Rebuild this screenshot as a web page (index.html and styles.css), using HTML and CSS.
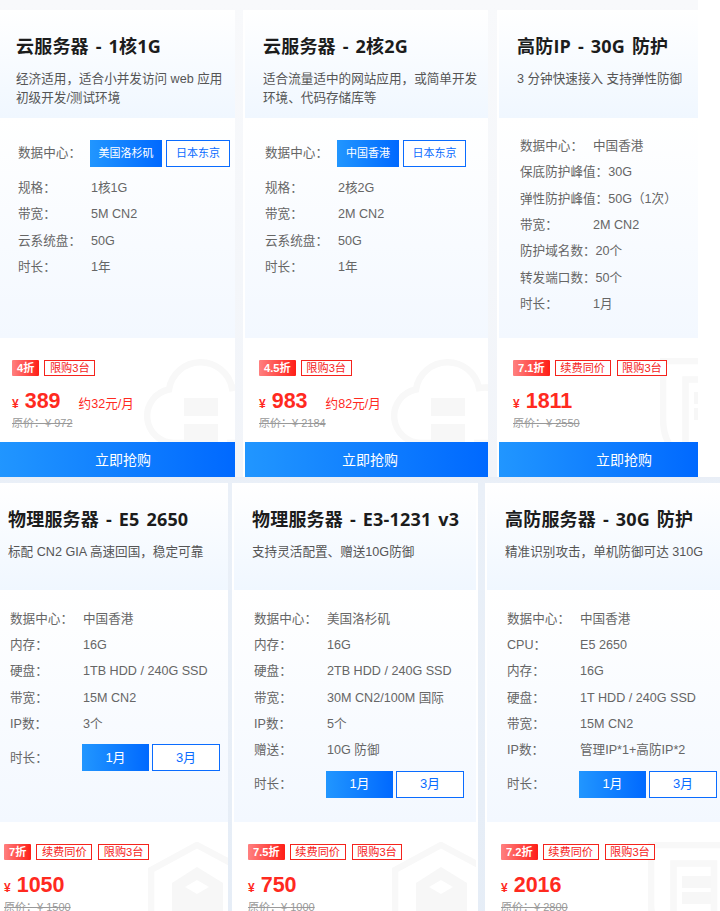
FILE: index.html
```html
<!DOCTYPE html>
<html lang="zh-CN">
<head>
<meta charset="utf-8">
<title>服务器套餐</title>
<link rel="stylesheet" href="styles.css">
</head>
<body>
<main class="page">
  <section class="row row-top">
    <article class="card w-a">
      <header class="head"><h2>云服务器 - 1核1G</h2><p>经济适用，适合小并发访问 web 应用<br>初级开发/测试环境</p></header>
      <div class="spec spec-select">
        <div class="line select"><span class="k">数据中心：</span><span class="opt on w72">美国洛杉矶</span><span class="opt w64">日本东京</span></div>
        <div class="line"><span class="k">规格：</span><span>1核1G</span></div>
        <div class="line"><span class="k">带宽：</span><span>5M CN2</span></div>
        <div class="line"><span class="k">云系统盘：</span><span>50G</span></div>
        <div class="line"><span class="k">时长：</span><span>1年</span></div>
      </div>
      <div class="foot">
        <svg class="mark" width="110" height="90" viewBox="0 0 110 90"><path class="ms" d="M44 85H31A27 27 0 0 1 26 31.5A32 32 0 0 1 89 30A27 27 0 0 1 100 85H84"/><path class="mf" d="M41 40h34v18H41zM41 66h34v18H41z"/></svg>
        <div class="tags"><span class="off">4折</span><span class="tag">限购3台</span></div>
        <div class="price"><span class="yen">¥</span><b>389</b><span class="per">约32元/月</span></div>
        <div class="old">原价：¥ 972</div>
      </div>
      <a class="buy">立即抢购</a>
    </article>
    <article class="card w-b">
      <header class="head"><h2>云服务器 - 2核2G</h2><p>适合流量适中的网站应用，或简单开发<br>环境、代码存储库等</p></header>
      <div class="spec spec-select">
        <div class="line select"><span class="k">数据中心：</span><span class="opt on w62">中国香港</span><span class="opt w63">日本东京</span></div>
        <div class="line"><span class="k">规格：</span><span>2核2G</span></div>
        <div class="line"><span class="k">带宽：</span><span>2M CN2</span></div>
        <div class="line"><span class="k">云系统盘：</span><span>50G</span></div>
        <div class="line"><span class="k">时长：</span><span>1年</span></div>
      </div>
      <div class="foot">
        <svg class="mark" width="110" height="90" viewBox="0 0 110 90"><path class="ms" d="M44 85H31A27 27 0 0 1 26 31.5A32 32 0 0 1 89 30A27 27 0 0 1 100 85H84"/><path class="mf" d="M41 40h34v18H41zM41 66h34v18H41z"/></svg>
        <div class="tags"><span class="off">4.5折</span><span class="tag">限购3台</span></div>
        <div class="price"><span class="yen">¥</span><b>983</b><span class="per">约82元/月</span></div>
        <div class="old">原价：¥ 2184</div>
      </div>
      <a class="buy">立即抢购</a>
    </article>
    <article class="card w-c">
      <header class="head"><h2>高防IP - 30G 防护</h2><p>3 分钟快速接入 支持弹性防御</p></header>
      <div class="spec spec-plain">
        <div class="line"><span class="k">数据中心：</span><span>中国香港</span></div>
        <div class="line"><span class="k">保底防护峰值：</span><span>30G</span></div>
        <div class="line"><span class="k">弹性防护峰值：</span><span>50G（1次）</span></div>
        <div class="line"><span class="k">带宽：</span><span>2M CN2</span></div>
        <div class="line"><span class="k">防护域名数：</span><span>20个</span></div>
        <div class="line"><span class="k">转发端口数：</span><span>50个</span></div>
        <div class="line"><span class="k">时长：</span><span>1月</span></div>
      </div>
      <div class="foot">
        <svg class="mark mark-s" width="100" height="90" viewBox="0 0 100 90"><path class="ms" d="M3 3H98V60C98 85 85 100 60 100H35C15 100 3 85 3 60Z"/><path class="ms" d="M25.5 21.5H66V92H25.5Z"/><path class="mf" d="M34 34h29v12H34zM34 50h29v12H34z"/></svg>
        <div class="tags"><span class="off">7.1折</span><span class="tag">续费同价</span><span class="tag">限购3台</span></div>
        <div class="price"><span class="yen">¥</span><b>1811</b></div>
        <div class="old">原价：¥ 2550</div>
      </div>
      <a class="buy">立即抢购</a>
    </article>
  </section>
  <section class="row row-bottom">
    <article class="card w-d">
      <header class="head"><h2>物理服务器 - E5 2650</h2><p>标配 CN2 GIA 高速回国，稳定可靠</p></header>
      <div class="spec spec-term">
        <div class="line"><span class="k">数据中心：</span><span>中国香港</span></div>
        <div class="line"><span class="k">内存：</span><span>16G</span></div>
        <div class="line"><span class="k">硬盘：</span><span>1TB HDD / 240G SSD</span></div>
        <div class="line"><span class="k">带宽：</span><span>15M CN2</span></div>
        <div class="line"><span class="k">IP数：</span><span>3个</span></div>
        <div class="line select term"><span class="k">时长：</span><span class="opt on big">1月</span><span class="opt big">3月</span></div>
      </div>
      <div class="foot">
        <svg class="mark" width="100" height="90" viewBox="0 0 100 90"><path class="ms" d="M49 3L96 28V80L49 105L3 80V28Z"/><path class="mf" fill-rule="evenodd" d="M49 25L75 41V70L49 86L24 70V41ZM49 38L37 45L49 52L61 45Z"/></svg>
        <div class="tags"><span class="off">7折</span><span class="tag">续费同价</span><span class="tag">限购3台</span></div>
        <div class="price"><span class="yen">¥</span><b>1050</b></div>
        <div class="old">原价：¥ 1500</div>
      </div>
    </article>
    <article class="card w-e">
      <header class="head"><h2>物理服务器 - E3-1231 v3</h2><p>支持灵活配置、赠送10G防御</p></header>
      <div class="spec spec-term">
        <div class="line"><span class="k">数据中心：</span><span>美国洛杉矶</span></div>
        <div class="line"><span class="k">内存：</span><span>16G</span></div>
        <div class="line"><span class="k">硬盘：</span><span>2TB HDD / 240G SSD</span></div>
        <div class="line"><span class="k">带宽：</span><span>30M CN2/100M 国际</span></div>
        <div class="line"><span class="k">IP数：</span><span>5个</span></div>
        <div class="line"><span class="k">赠送：</span><span>10G 防御</span></div>
        <div class="line select term"><span class="k">时长：</span><span class="opt on big">1月</span><span class="opt big">3月</span></div>
      </div>
      <div class="foot">
        <svg class="mark" width="100" height="90" viewBox="0 0 100 90"><path class="ms" d="M49 3L96 28V80L49 105L3 80V28Z"/><path class="mf" fill-rule="evenodd" d="M49 25L75 41V70L49 86L24 70V41ZM49 38L37 45L49 52L61 45Z"/></svg>
        <div class="tags"><span class="off">7.5折</span><span class="tag">续费同价</span><span class="tag">限购3台</span></div>
        <div class="price"><span class="yen">¥</span><b>750</b></div>
        <div class="old">原价：¥ 1000</div>
      </div>
    </article>
    <article class="card w-f">
      <header class="head"><h2>高防服务器 - 30G 防护</h2><p>精准识别攻击，单机防御可达 310G</p></header>
      <div class="spec spec-term">
        <div class="line"><span class="k">数据中心：</span><span>中国香港</span></div>
        <div class="line"><span class="k">CPU：</span><span>E5 2650</span></div>
        <div class="line"><span class="k">内存：</span><span>16G</span></div>
        <div class="line"><span class="k">硬盘：</span><span>1T HDD / 240G SSD</span></div>
        <div class="line"><span class="k">带宽：</span><span>15M CN2</span></div>
        <div class="line"><span class="k">IP数：</span><span>管理IP*1+高防IP*2</span></div>
        <div class="line select term"><span class="k">时长：</span><span class="opt on big">1月</span><span class="opt big">3月</span></div>
      </div>
      <div class="foot">
        <svg class="mark mark-s" width="100" height="90" viewBox="0 0 100 90"><path class="ms" d="M3 3H98V60C98 85 85 100 60 100H35C15 100 3 85 3 60Z"/><path class="ms" d="M25.5 21.5H66V92H25.5Z"/><path class="mf" d="M34 34h29v12H34zM34 50h29v12H34z"/></svg>
        <div class="tags"><span class="off">7.2折</span><span class="tag">续费同价</span><span class="tag">限购3台</span></div>
        <div class="price"><span class="yen">¥</span><b>2016</b></div>
        <div class="old">原价：¥ 2800</div>
      </div>
    </article>
  </section>
</main>
</body>
</html>
```
FILE: styles.css
```css
* { box-sizing: border-box; }
html, body { margin: 0; height: 911px; overflow: hidden; background: #fff; }
body { font-family: "Liberation Sans", "Noto Sans CJK SC", sans-serif; font-size: 12.6px; color: #666; }
.page { width: 720px; height: 911px; overflow: hidden; }

.row { display: flex; align-items: flex-start; }
.row-top { width: 698px; height: 477px; padding-top: 10px; background: linear-gradient(#f8f9fb, #f1f4f9); }
.row-bottom { width: 720px; height: 620px; padding-top: 6px; background: linear-gradient(#e9eef6 0, #eaf0f8 6px, #e4ecf6 100%); overflow: hidden; }

.card { flex: none; overflow: hidden; background: #fff; }
.w-a { width: 237px; margin-right: 8px; }
.row-top .w-a { margin-left: -2px; }
.w-b { width: 245px; margin-right: 9px; padding-left: 2px; }
.w-c { width: 201px; padding-left: 2px; }
.w-d { width: 238px; margin-left: -10px; margin-right: 4px; }
.w-e { width: 246px; margin-right: 7px; padding: 0 2px; }
.w-f { width: 235px; padding-left: 2px; }

.head { height: 108px; padding: 24px 0 0 18px; background: linear-gradient(#fff, #f0f7ff); }
.row-bottom .head { height: 107px; }
.head h2 { margin: 0; font: 700 18px/24px "Open Sans", "Noto Sans CJK SC", sans-serif; letter-spacing: .2px; word-spacing: 2px; color: #1c1c1c; white-space: nowrap; }
.head p { margin: 12px 0 0; font-size: 12.6px; line-height: 19px; color: #555; white-space: nowrap; }

.spec { padding-left: 20px; background: linear-gradient(#fff, #f3f8ff); }
.spec-select { height: 220px; padding-top: 22px; }
.spec-plain { height: 220px; padding-top: 14px; padding-left: 21px; }
.spec-term { height: 232px; padding-top: 14.6px; }
.line { display: flex; align-items: baseline; height: 26.3px; padding-top: 1.2px; line-height: 26.3px; white-space: nowrap; }
.k { flex: none; min-width: 73px; }
.select { align-items: center; height: 27px; padding-top: 0; margin-bottom: 7px; }
.select .k { min-width: 72px; }
.term { margin-top: 8.4px; margin-bottom: 0; }

.opt { display: flex; align-items: center; justify-content: center; height: 27px; margin-right: 4px; font-size: 11px; color: #0a6cff; background: #fff; border: 1px solid #0a6cff; }
.opt.big { width: 68px; margin-right: 0; font-size: 13px; }
.opt.on { color: #fff; border: 0; background: linear-gradient(90deg, #2196ff, #0069ff); }
.opt.on.big { width: 67px; margin-right: 3px; }
.w72 { width: 72px; }
.w64 { width: 64px; }
.w62 { width: 62px; }
.w63 { width: 63px; }

.foot { position: relative; height: 104px; padding: 22px 0 0 14px; background: #fff; overflow: hidden; }
.mark { position: absolute; left: 145px; top: 20px; }
.mark-s { left: 161px; }
.row-bottom .mark { left: 158px; }
.row-bottom .mark-s { left: 161px; }
.ms { fill: none; stroke: #f8f8f8; stroke-width: 6.5; }
.mf { fill: #f7f7f7; }

.tags { position: relative; display: flex; height: 16px; }
.tag, .off { display: flex; align-items: center; height: 16px; font-size: 11.2px; line-height: 14px; white-space: nowrap; }
.tag { padding: 0 4.5px; margin-right: 6px; color: #f5231c; background: #fff; border: 1px solid #f5231c; }
.off { padding: 0 5px; margin-right: 5px; color: #fff; font-weight: 700; background: linear-gradient(90deg, #ff8080, #ff1e16); border-radius: 1px; }
.price { position: relative; display: flex; align-items: baseline; height: 24px; margin-top: 13px; color: #ff2a1f; line-height: 24px; white-space: nowrap; }
.yen { margin-right: 6px; font-size: 12px; font-weight: 700; }
.price b { font-size: 21.5px; }
.per { margin-left: 18px; font-size: 12.6px; }
.old { position: relative; height: 15px; margin-top: 3px; font-size: 11px; line-height: 15px; color: #999; text-decoration: line-through; white-space: nowrap; }

.buy { display: block; height: 35px; padding-left: 97px; font-size: 14px; line-height: 36px; color: #fff; background: linear-gradient(90deg, #2196ff, #0069ff); }
```
